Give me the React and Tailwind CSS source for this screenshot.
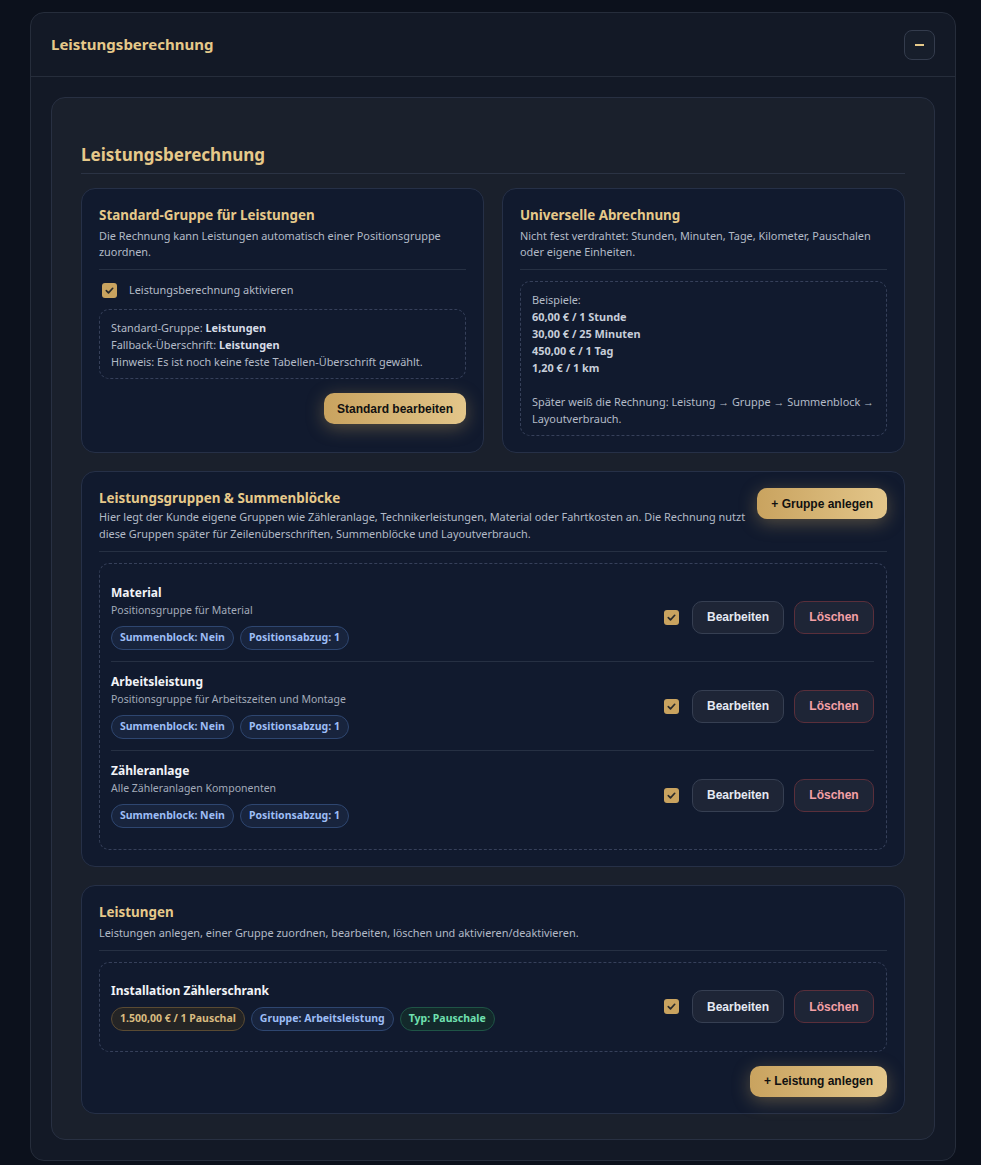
import React from 'react';

const goldBtn =
  "rounded-[10px] bg-gradient-to-r from-[#c9a35f] to-[#e3c68a] text-[#111] font-bold text-[12px] shadow-[0_4px_18px_rgba(212,175,100,0.35)] [font-family:'Liberation_Sans',Arial,sans-serif]";

const Check = () => (
  <span className="inline-flex w-[15px] h-[15px] items-center justify-center rounded-[3px] bg-[#c9a35f]">
    <svg width="11" height="11" viewBox="0 0 12 12" fill="none">
      <path d="M2.5 6.2l2.4 2.4 4.6-5" stroke="#2a2a2a" strokeWidth="1.8" strokeLinecap="round" strokeLinejoin="round" />
    </svg>
  </span>
);

const Badge = ({ tone = 'blue', children }) => {
  const tones = {
    blue: 'border-[#2e4670] bg-[#18243d] text-[#9dbdf5]',
    gold: 'border-[#5a4b33] bg-[#242425] text-[#d8bb80]',
    green: 'border-[#1f5446] bg-[#13292b] text-[#6fe0b0]',
  };
  return (
    <span className={`inline-flex items-center h-[24px] px-2 rounded-full border text-[10.5px] font-bold ${tones[tone]}`}>
      {children}
    </span>
  );
};

const RowActions = () => (
  <div className="flex items-center gap-[10px] shrink-0 [font-family:'Liberation_Sans',Arial,sans-serif]">
    <span className="mr-[3px] flex"><Check /></span>
    <button className="h-[33px] w-[92px] rounded-[10px] border border-[#363f52] bg-[#1e2536] text-[#e5e9f2] text-[12px] font-bold">
      Bearbeiten
    </button>
    <button className="h-[33px] w-[80px] rounded-[10px] border border-[#5a2f3b] bg-[#1e2536] text-[#f4a0a6] text-[12px] font-bold">
      Löschen
    </button>
  </div>
);

const GroupRow = ({ name, sub, last }) => (
  <div className={`flex items-center justify-between pt-[12px] ${last ? 'pb-[12px]' : 'pb-[11px] border-b border-[#263043]'}`}>
    <div>
      <div className="text-[12px] font-bold text-[#f1f3f7] leading-[16px]">{name}</div>
      <div className="text-[10.5px] text-[#a3abba] leading-[17px] mt-[1px]">{sub}</div>
      <div className="flex gap-[6px] mt-[7px]">
        <Badge>Summenblock: Nein</Badge>
        <Badge>Positionsabzug: 1</Badge>
      </div>
    </div>
    <RowActions />
  </div>
);

const Card = ({ className = '', children }) => (
  <div className={`rounded-[14px] border border-[#263047] bg-[#111a2e] px-[17px] pt-[16px] pb-[16px] ${className}`}>
    {children}
  </div>
);

const CardHead = ({ title, desc }) => (
  <div className="pb-[9px] border-b border-[#263043]">
    <h3 className="text-[13.4px] font-bold text-[#e6c98a] leading-[20px]">{title}</h3>
    <p className="text-[10.9px] text-[#b3bac7] leading-[16px] mt-[3px]">{desc}</p>
  </div>
);

export default function App() {
  return (
    <div className="min-h-[1165px] bg-[#0c111c] pl-[30px] pr-[25px] pt-[12px] pb-[7px] [font-family:'Noto_Sans',sans-serif]">
      <div className="rounded-[14px] border border-[#262d3b] bg-[#131926]">
        <div className="flex items-center justify-between h-[64px] px-[20px] border-b border-[#262d3b]">
          <h1 className="text-[15px] font-bold text-[#e6c98a]">Leistungsberechnung</h1>
          <button className="w-[31px] h-[30px] rounded-[8px] border border-[#343c4d] bg-[#171e2b] flex items-center justify-center">
            <span className="block w-[9px] h-[2px] bg-[#e6c98a]" />
          </button>
        </div>

        <div className="p-[20px]">
          <div className="rounded-[14px] border border-[#283042] bg-[#1a202c] px-[29px] pt-[44px] pb-[25px]">
            <h2 className="text-[17px] font-bold text-[#e6c98a] leading-[26px] pb-[5px] border-b border-[#2b3344]">
              Leistungsberechnung
            </h2>

            <div className="grid grid-cols-2 gap-[18px] mt-[14px]">
              <Card>
                <CardHead
                  title="Standard-Gruppe für Leistungen"
                  desc="Die Rechnung kann Leistungen automatisch einer Positionsgruppe zuordnen."
                />
                <label className="flex items-center gap-[12px] mt-[13px] h-[15px] text-[10.9px] text-[#b3bac7]">
                  <span className="ml-[3px] flex"><Check /></span>
                  Leistungsberechnung aktivieren
                </label>
                <div className="mt-[11px] rounded-[10px] border border-dashed border-[#36405a] px-[11px] py-[8.5px] text-[10.9px] leading-[17px] text-[#b3bac7]">
                  <div>Standard-Gruppe: <b className="text-[#d7dce6]">Leistungen</b></div>
                  <div>Fallback-Überschrift: <b className="text-[#d7dce6]">Leistungen</b></div>
                  <div>Hinweis: Es ist noch keine feste Tabellen-Überschrift gewählt.</div>
                </div>
                <div className="flex justify-end mt-[14px]">
                  <button className={`${goldBtn} h-[31px] px-[13px]`}>Standard bearbeiten</button>
                </div>
              </Card>

              <Card>
                <CardHead
                  title="Universelle Abrechnung"
                  desc="Nicht fest verdrahtet: Stunden, Minuten, Tage, Kilometer, Pauschalen oder eigene Einheiten."
                />
                <div className="mt-[11px] rounded-[10px] border border-dashed border-[#36405a] px-[11px] py-[8.5px] text-[10.9px] leading-[17px] text-[#b3bac7]">
                  <div>Beispiele:</div>
                  <b className="block text-[#c7ceda]">60,00 € / 1 Stunde</b>
                  <b className="block text-[#c7ceda]">30,00 € / 25 Minuten</b>
                  <b className="block text-[#c7ceda]">450,00 € / 1 Tag</b>
                  <b className="block text-[#c7ceda]">1,20 € / 1 km</b>
                  <div className="h-[17px]" />
                  <div>Später weiß die Rechnung: Leistung → Gruppe → Summenblock → Layoutverbrauch.</div>
                </div>
              </Card>
            </div>

            <Card className="mt-[18px]">
              <div className="flex items-start justify-between gap-[4px] pb-[8.5px] border-b border-[#263043]">
                <div>
                  <h3 className="text-[13.4px] font-bold text-[#e6c98a] leading-[20px]">Leistungsgruppen &amp; Summenblöcke</h3>
                  <p className="text-[10.9px] text-[#b3bac7] leading-[17px]">
                    Hier legt der Kunde eigene Gruppen wie Zähleranlage, Technikerleistungen, Material oder Fahrtkosten an. Die Rechnung nutzt diese Gruppen später für Zeilenüberschriften, Summenblöcke und Layoutverbrauch.
                  </p>
                </div>
                <button className={`${goldBtn} h-[31px] px-[14px] shrink-0`}>+ Gruppe anlegen</button>
              </div>
              <div className="mt-[11px] rounded-[10px] border border-dashed border-[#36405a] pl-[11px] pr-[12px] py-[9px]">
                <GroupRow name="Material" sub="Positionsgruppe für Material" />
                <GroupRow name="Arbeitsleistung" sub="Positionsgruppe für Arbeitszeiten und Montage" />
                <GroupRow name="Zähleranlage" sub="Alle Zähleranlagen Komponenten" last />
              </div>
            </Card>

            <Card className="mt-[18px]">
              <CardHead
                title="Leistungen"
                desc="Leistungen anlegen, einer Gruppe zuordnen, bearbeiten, löschen und aktivieren/deaktivieren."
              />
              <div className="mt-[11px] rounded-[10px] border border-dashed border-[#36405a] pl-[11px] pr-[12px] py-[9px]">
                <div className="flex items-center justify-between py-[11px]">
                  <div>
                    <div className="text-[12px] font-bold text-[#f1f3f7] leading-[16px]">Installation Zählerschrank</div>
                    <div className="flex gap-[6px] mt-[8px]">
                      <Badge tone="gold">1.500,00 € / 1 Pauschal</Badge>
                      <Badge>Gruppe: Arbeitsleistung</Badge>
                      <Badge tone="green">Typ: Pauschale</Badge>
                    </div>
                  </div>
                  <RowActions />
                </div>
              </div>
              <div className="flex justify-end mt-[14px]">
                <button className={`${goldBtn} h-[31px] px-[14px]`}>+ Leistung anlegen</button>
              </div>
            </Card>
          </div>
        </div>
      </div>
    </div>
  );
}
